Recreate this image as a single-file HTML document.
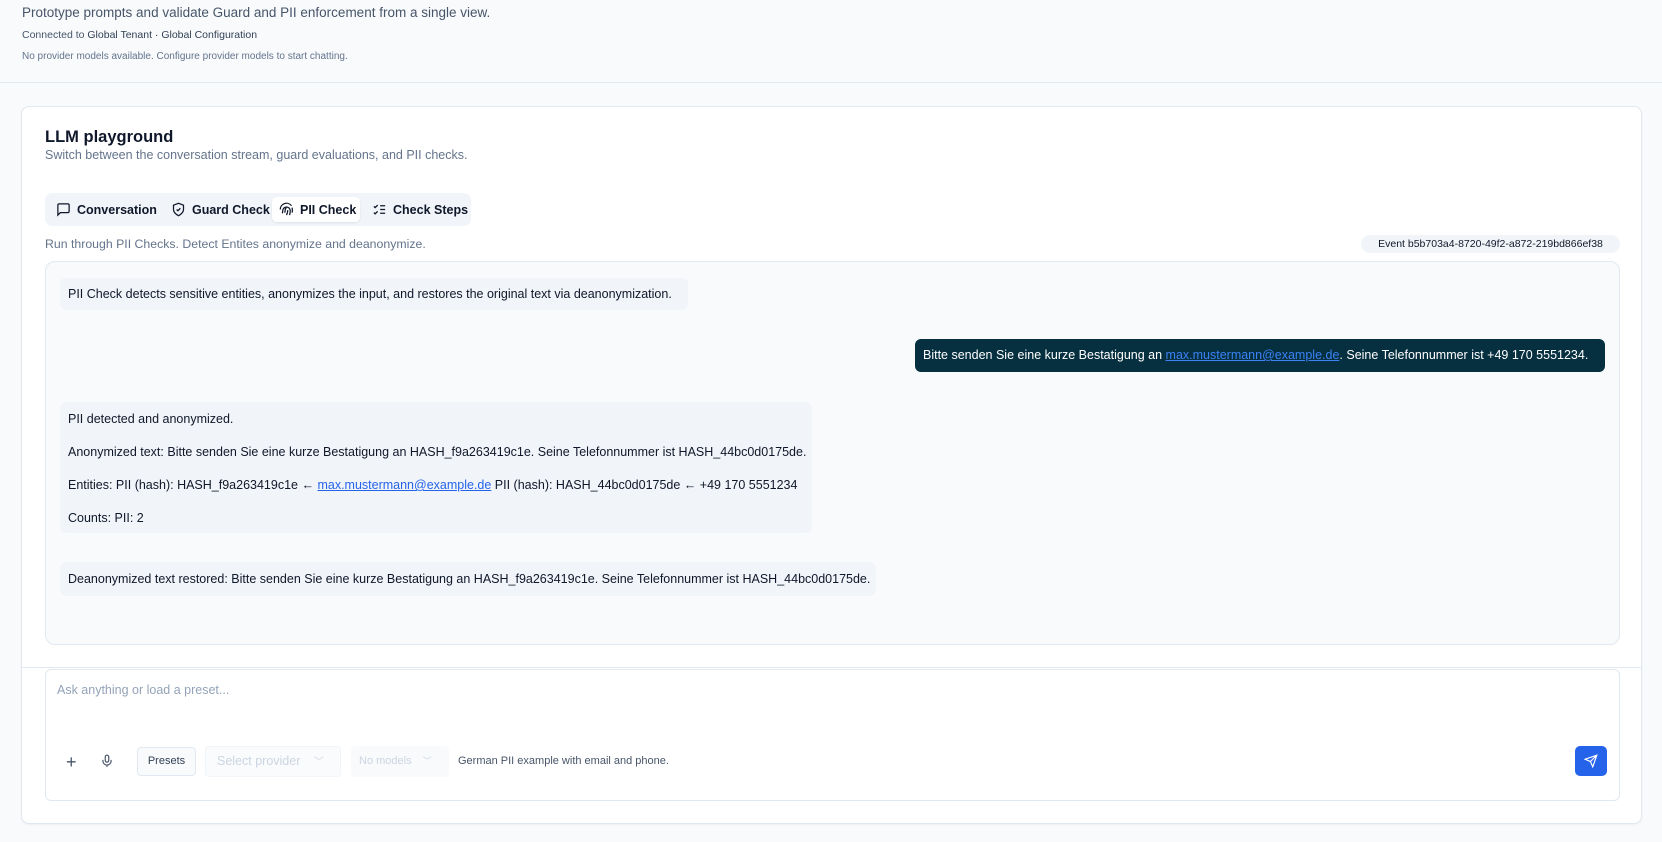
<!DOCTYPE html>
<html><head><meta charset="utf-8"><style>
*{box-sizing:border-box;margin:0;padding:0}
body{width:1662px;height:842px;background:#f8fafc;font-family:"Liberation Sans",sans-serif;color:#0f172a;position:relative;overflow:hidden}
.abs{position:absolute;white-space:nowrap}
.hdr{left:0;top:0;width:1662px;height:83px;border-bottom:1px solid #e2e8f0}
.card{left:21px;top:106px;width:1621px;height:718px;background:#fff;border:1px solid #e2e8f0;border-radius:8px;box-shadow:0 1px 2px rgba(0,0,0,.05)}
.tabs{left:45px;top:193px;width:426px;height:33px;background:#f1f5f9;border-radius:7px}
.tab{position:absolute;top:4px;height:25px;display:flex;align-items:center;gap:6px;font-size:12.5px;font-weight:bold;color:#0f172a;padding:0 7px}
.tab svg{flex-shrink:0}
.tab.act{background:#fff;border-radius:5px;box-shadow:0 1px 2px rgba(0,0,0,.08)}
.chat{left:45px;top:261px;width:1575px;height:384px;background:#f8fafc;border:1px solid #e2e8f0;border-radius:10px}
.b{position:absolute;background:#f1f5f9;border-radius:6px;font-size:12.5px;color:#0f172a;padding:0 8px;white-space:nowrap}
a{color:#2563eb;text-decoration:underline}
.input{left:45px;top:669px;width:1575px;height:132px;border:1px solid #e2e8f0;border-radius:6px;background:#fff}
</style></head><body>
<div class="abs hdr"></div>
<div class="abs" style="left:22px;top:5px;font-size:13.5px;color:#475569">Prototype prompts and validate Guard and PII enforcement from a single view.</div>
<div class="abs" style="left:22px;top:29px;font-size:10.5px;color:#475569">Connected to <span style="color:#334155">Global Tenant · Global Configuration</span></div>
<div class="abs" style="left:22px;top:51px;font-size:10px;color:#64748b">No provider models available. Configure provider models to start chatting.</div>

<div class="abs card"></div>
<div class="abs" style="left:45px;top:128px;font-size:16.5px;font-weight:bold">LLM playground</div>
<div class="abs" style="left:45px;top:148px;font-size:12.5px;color:#64748b">Switch between the conversation stream, guard evaluations, and PII checks.</div>

<div class="abs tabs">
 <div class="tab" style="left:4px"><svg width="15" height="15" viewBox="0 0 24 24" fill="none" stroke="#0f172a" stroke-width="2"><path d="M21 15a2 2 0 0 1-2 2H7l-4 4V5a2 2 0 0 1 2-2h14a2 2 0 0 1 2 2z"/></svg>Conversation</div>
 <div class="tab" style="left:119px"><svg width="15" height="15" viewBox="0 0 24 24" fill="none" stroke="#0f172a" stroke-width="2"><path d="M12 22s8-4 8-10V5l-8-3-8 3v7c0 6 8 10 8 10z"/><path d="m9 12 2 2 4-4"/></svg>Guard Check</div>
 <div class="tab act" style="left:227px;width:88px"><svg width="15" height="15" viewBox="0 0 24 24" fill="none" stroke="#0f172a" stroke-width="2"><path d="M12 10a2 2 0 0 0-2 2c0 1 0 3-1 5M14 13c0 3-1 6-2 8M17 21c.5-2 1-4 1-7a6 6 0 0 0-12 0c0 1 0 3-1 4M2 12a10 10 0 0 1 18-6M21 9c.5 3 .5 6 0 8"/></svg>PII Check</div>
 <div class="tab" style="left:320px"><svg width="15" height="15" viewBox="0 0 24 24" fill="none" stroke="#0f172a" stroke-width="2"><path d="m3 7 2 2 4-4M3 17l2 2 4-4M13 6h8M13 12h8M13 18h8"/></svg>Check Steps</div>
</div>
<div class="abs" style="left:45px;top:237px;font-size:12.3px;color:#64748b">Run through PII Checks. Detect Entites anonymize and deanonymize.</div>
<div class="abs" style="left:1361px;top:235px;width:259px;height:18px;background:#f1f5f9;border-radius:9px;font-size:10.5px;line-height:18px;text-align:center;color:#0f172a">Event b5b703a4-8720-49f2-a872-219bd866ef38</div>

<div class="abs chat"></div>
<div class="b" style="left:60px;top:278px;height:32px;line-height:32px;width:628px">PII Check detects sensitive entities, anonymizes the input, and restores the original text via deanonymization.</div>
<div class="b" style="left:915px;top:339px;height:33px;line-height:33px;width:690px;background:#062f40;color:#fff">Bitte senden Sie eine kurze Bestatigung an <a style="color:#3b82f6">max.mustermann@example.de</a>. Seine Telefonnummer ist +49 170 5551234.</div>
<div class="b" style="left:60px;top:402px;height:131px;width:752px;line-height:33px;padding-top:1px">PII detected and anonymized.<br>Anonymized text: Bitte senden Sie eine kurze Bestatigung an HASH_f9a263419c1e. Seine Telefonnummer ist HASH_44bc0d0175de.<br>Entities: PII (hash): HASH_f9a263419c1e ← <a>max.mustermann@example.de</a> PII (hash): HASH_44bc0d0175de ← +49 170 5551234<br>Counts: PII: 2</div>
<div class="b" style="left:60px;top:562px;height:34px;line-height:34px;width:816px">Deanonymized text restored: Bitte senden Sie eine kurze Bestatigung an HASH_f9a263419c1e. Seine Telefonnummer ist HASH_44bc0d0175de.</div>

<div class="abs" style="left:22px;top:667px;width:1619px;height:1px;background:#e2e8f0"></div>
<div class="abs input"></div>
<div class="abs" style="left:57px;top:683px;font-size:12.5px;color:#94a3b8">Ask anything or load a preset...</div>
<div class="abs" style="left:66px;top:752px;font-size:18px;color:#475569">+</div>
<svg class="abs" style="left:100px;top:753px" width="14" height="16" viewBox="0 0 24 24" fill="none" stroke="#475569" stroke-width="2"><rect x="9" y="2" width="6" height="12" rx="3"/><path d="M5 10v2a7 7 0 0 0 14 0v-2M12 19v3"/></svg>
<div class="abs" style="left:137px;top:747px;width:59px;height:29px;border:1px solid #e2e8f0;border-radius:4px;background:#f8fafc;font-size:11px;line-height:27px;text-align:center;color:#334155">Presets</div>
<div class="abs" style="left:205px;top:746px;width:136px;height:31px;border:1px solid #f1f5f9;border-radius:4px;background:#fafbfc;font-size:12.5px;line-height:29px;color:#cbd5e1;padding-left:11px">Select provider <span style="margin-left:10px;font-size:10px">﹀</span></div>
<div class="abs" style="left:351px;top:746px;width:98px;height:31px;border-radius:4px;background:#f8fafc;font-size:11px;line-height:31px;color:#cbd5e1;padding-left:8px">No models <span style="margin-left:8px;font-size:9px">﹀</span></div>
<div class="abs" style="left:458px;top:755px;font-size:11px;color:#475569">German PII example with email and phone.</div>
<div class="abs" style="left:1575px;top:746px;width:32px;height:30px;background:#2563eb;border-radius:5px"><svg style="margin:8px 9px" width="14" height="14" viewBox="0 0 24 24" fill="none" stroke="#fff" stroke-width="2"><path d="M22 2 11 13M22 2l-7 20-4-9-9-4z"/></svg></div>
</body></html>
